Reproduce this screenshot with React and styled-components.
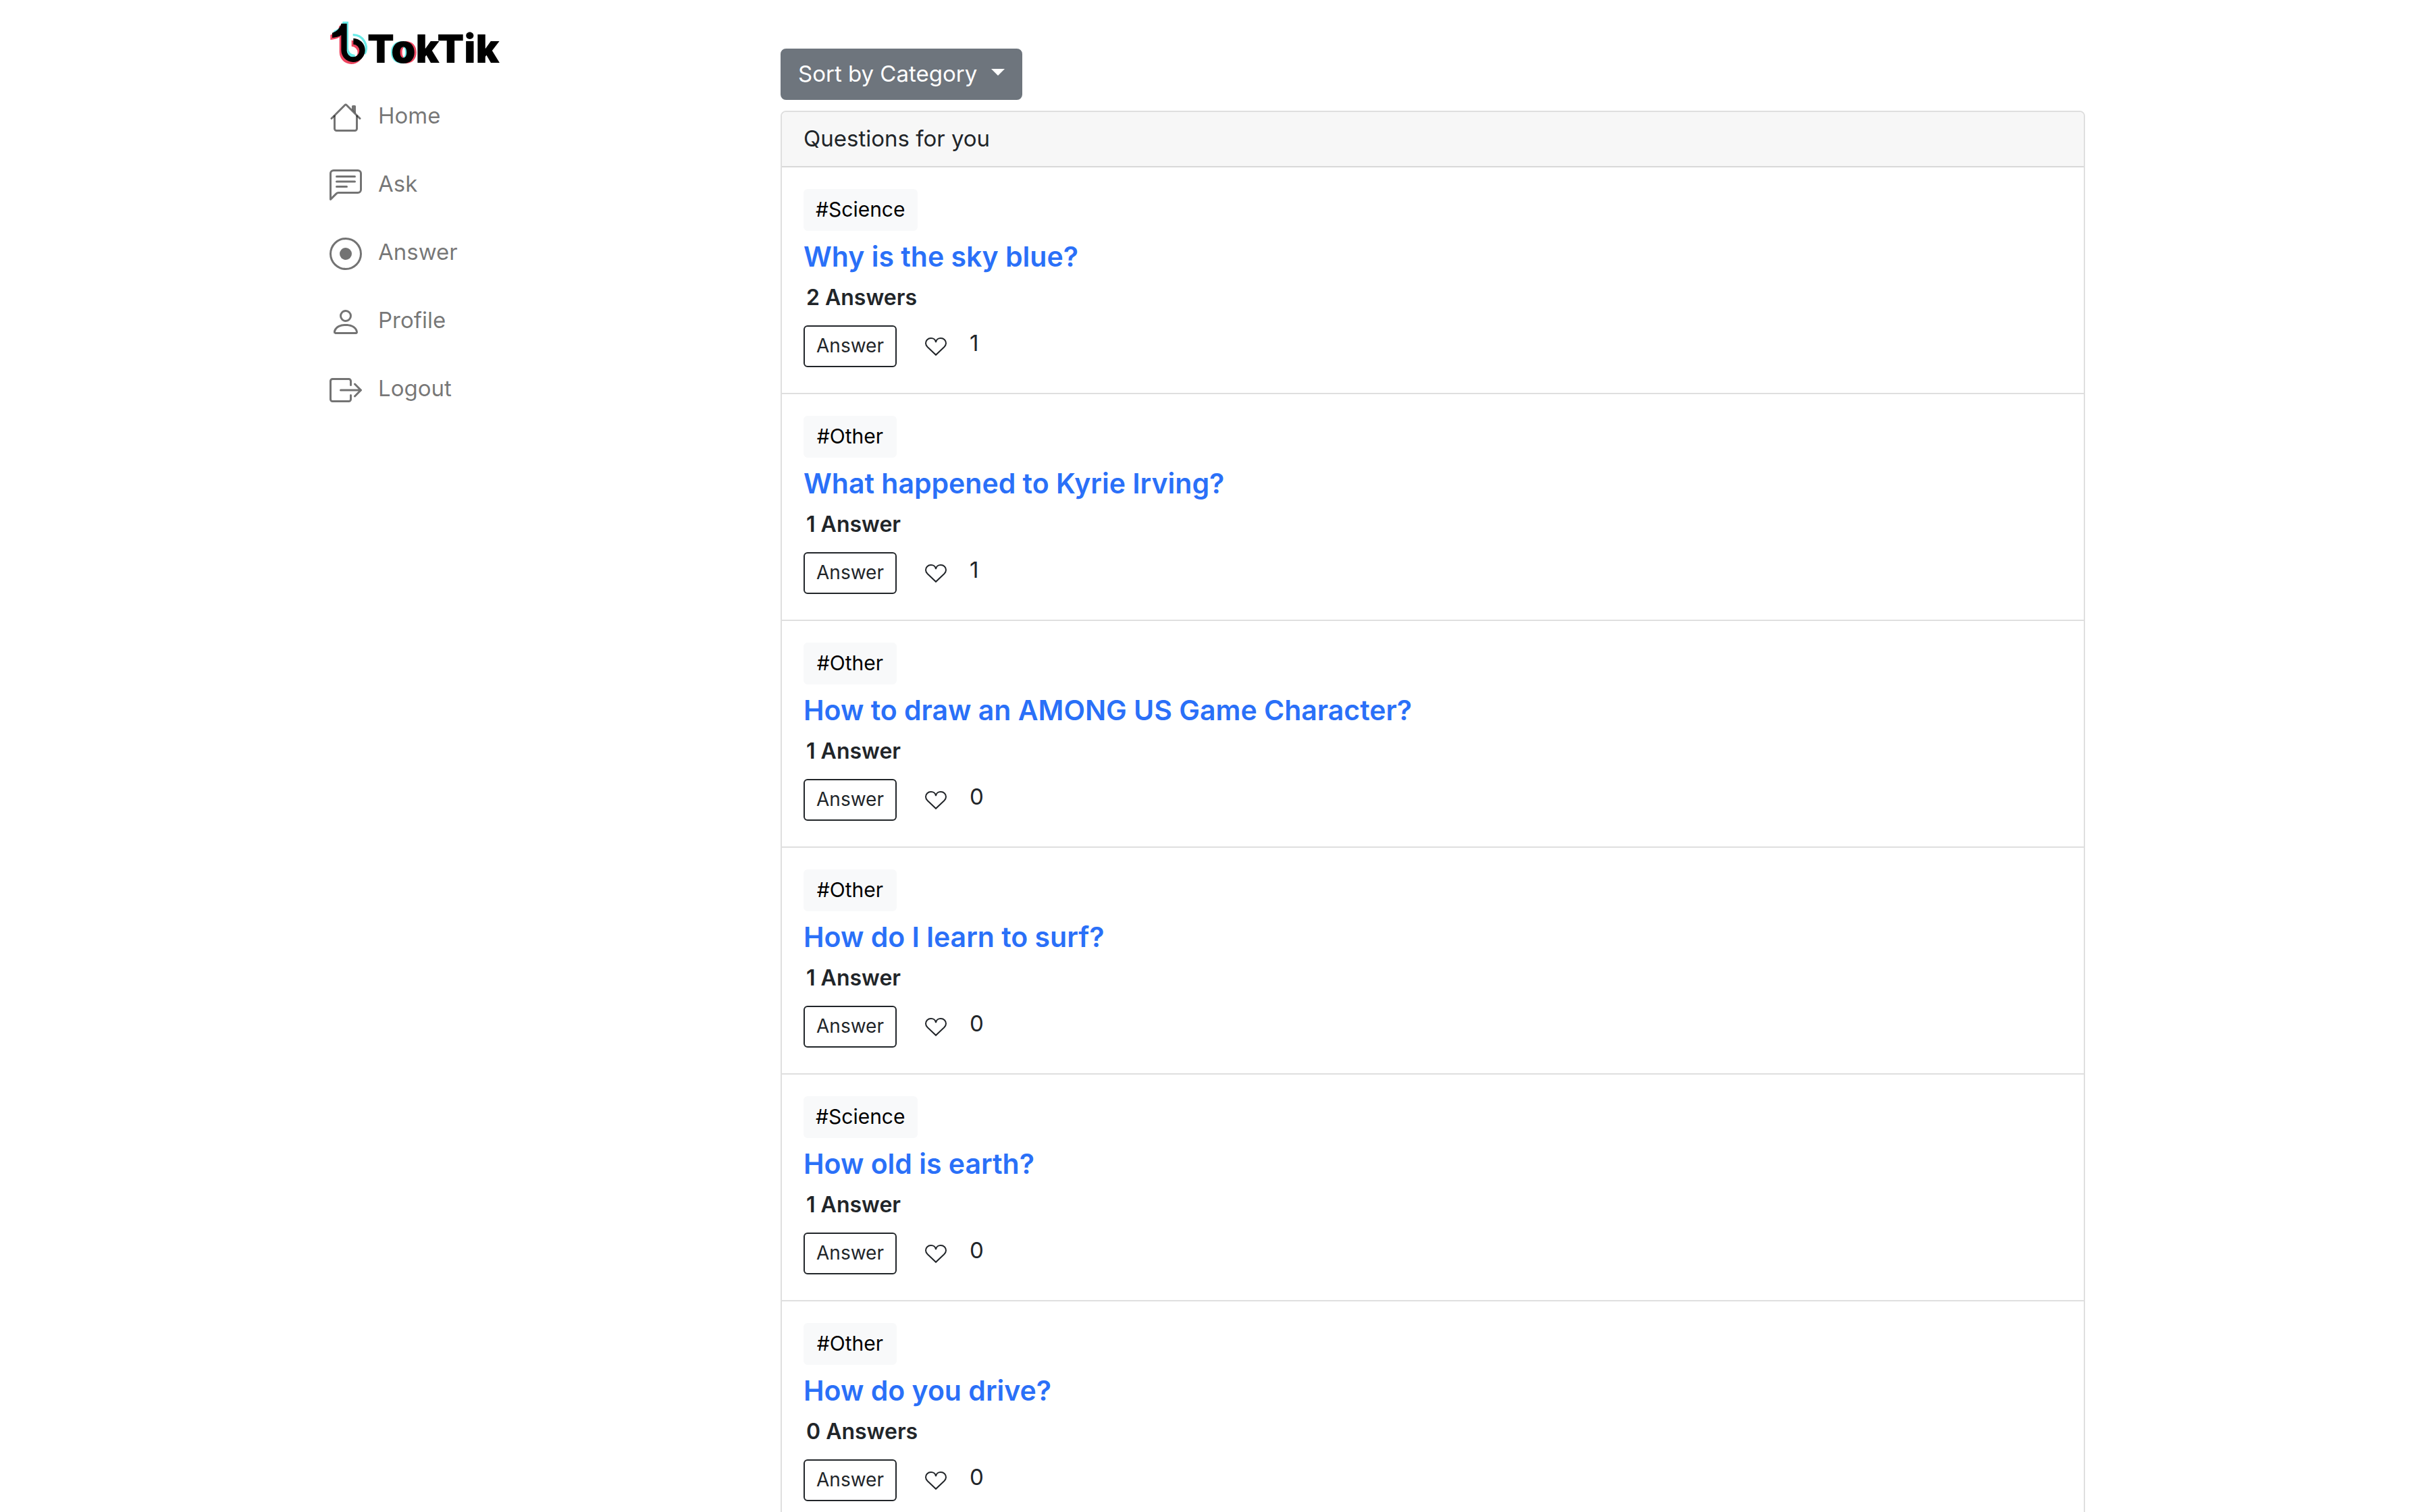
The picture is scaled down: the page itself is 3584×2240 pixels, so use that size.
import React from "react";
import styled, { createGlobalStyle } from "styled-components";

const GlobalStyle = createGlobalStyle`
  * { box-sizing: border-box; }
  body {
    margin: 0;
    background: #fff;
    color: #212529;
    font-family: Inter, "Open Sans", sans-serif;
    font-size: 33px;
    line-height: 48px;
  }
`;

const Container = styled.div`
  display: grid;
  grid-template-columns: 1fr 3fr;
  max-width: 2640px;
  margin: 0 auto;
`;

const Sidebar = styled.aside`
  padding: 26px 16px;
`;

const Brand = styled.a`
  display: flex;
  align-items: flex-start;
  color: #000;
  text-decoration: none;
`;

const BrandMark = styled.svg`
  width: 56px;
  height: 74px;
`;

const Wordmark = styled.span`
  padding-top: 22px;
  font-size: 58px;
  font-weight: 900;
`;

const AccentLetter = styled.span`
  text-shadow: -2px 0 #69ebe8, 3px 0 #ee4660;
`;

const Nav = styled.nav`
  display: flex;
  flex-direction: column;
  gap: 53px;
  padding-top: 50px;
`;

const NavLink = styled.a`
  display: flex;
  align-items: flex-start;
  gap: 24px;
  color: rgba(0, 0, 0, 0.55);
  line-height: 42px;
  text-decoration: none;
`;

const NavIcon = styled.svg`
  width: 48px;
  height: 48px;
  fill: currentColor;
`;

const Main = styled.main`
  padding: 72px 24px 0;
`;

const SortField = styled.label`
  display: inline-flex;
  align-items: center;
  position: relative;
  margin-bottom: 16px;
  vertical-align: top;

  &::after {
    content: "";
    position: absolute;
    right: 26px;
    top: 30px;
    border: 10px solid transparent;
    border-top-color: #fff;
    border-bottom: 0;
    pointer-events: none;
  }
`;

const SortSelect = styled.select`
  appearance: none;
  width: 358px;
  padding: 11px 24px 13px;
  border: 2px solid #6e757d;
  border-radius: 8px;
  background: #6e757d;
  color: #fff;
  font: inherit;
`;

const Card = styled.section`
  border: 2px solid #dfdfdf;
  border-radius: 8px;
  overflow: hidden;
`;

const CardHeader = styled.header`
  padding: 15px 32px 17px;
  border-bottom: 2px solid #d8d8d8;
  background: #f7f7f7;
`;

const QuestionList = styled.ul`
  margin: 0;
  padding: 0;
  list-style: none;
`;

const Question = styled.li`
  display: flex;
  flex-direction: column;
  align-items: flex-start;
  padding: 32px 32px 38px;
  border-bottom: 2px solid #dfdfdf;
`;

const SmallButton = styled.button`
  min-width: 138px;
  padding: 7px 16px 9px;
  border: 2px solid ${(p) => (p.$outlined ? "#212529" : "#f8f9fa")};
  border-radius: 6px;
  background: ${(p) => (p.$outlined ? "transparent" : "#f8f9fa")};
  color: ${(p) => (p.$outlined ? "#212529" : "#000")};
  font: inherit;
  font-size: ${(p) => (p.$outlined ? "28px" : "30px")};
  line-height: 42px;
`;

const Title = styled.a`
  margin-top: 14px;
  color: #2a70f8;
  font-size: 41px;
  font-weight: 600;
  text-decoration: none;
`;

const AnswerCount = styled.div`
  margin: 13px 4px 17px;
  font-size: 32px;
  font-weight: 600;
`;

const Actions = styled.div`
  display: flex;
  align-items: flex-start;
`;

const LikeButton = styled.button`
  display: flex;
  margin: 16px 34px 0 42px;
  padding: 0;
  border: 0;
  background: none;
  color: inherit;
`;

const HeartIcon = styled.svg`
  width: 32px;
  height: 32px;
  fill: none;
  stroke: currentColor;
`;

const LikeCount = styled.span`
  padding-top: 2px;
`;

const navItems = [
  {
    label: "Home",
    paths: [
      "M2 13.5V7h1v6.5a.5.5 0 0 0 .5.5h9a.5.5 0 0 0 .5-.5V7h1v6.5a1.5 1.5 0 0 1-1.5 1.5h-9A1.5 1.5 0 0 1 2 13.5zm11-11V6l-2-2V2.5a.5.5 0 0 1 .5-.5h1a.5.5 0 0 1 .5.5z",
      "M7.293 1.5a1 1 0 0 1 1.414 0l6.647 6.646a.5.5 0 0 1-.708.708L8 2.207 1.354 8.854a.5.5 0 1 1-.708-.708L7.293 1.5z",
    ],
  },
  {
    label: "Ask",
    paths: [
      "M14 1a1 1 0 0 1 1 1v8a1 1 0 0 1-1 1H4.414A2 2 0 0 0 3 11.586l-2 2V2a1 1 0 0 1 1-1h12zM2 0a2 2 0 0 0-2 2v12.793a.5.5 0 0 0 .854.353l2.853-2.853A1 1 0 0 1 4.414 12H14a2 2 0 0 0 2-2V2a2 2 0 0 0-2-2H2z",
      "M3 3.5a.5.5 0 0 1 .5-.5h9a.5.5 0 0 1 0 1h-9a.5.5 0 0 1-.5-.5zM3 6a.5.5 0 0 1 .5-.5h9a.5.5 0 0 1 0 1h-9A.5.5 0 0 1 3 6zm0 2.5a.5.5 0 0 1 .5-.5h5a.5.5 0 0 1 0 1h-5a.5.5 0 0 1-.5-.5z",
    ],
  },
  {
    label: "Answer",
    paths: [
      "M8 15A7 7 0 1 1 8 1a7 7 0 0 1 0 14zm0 1A8 8 0 1 0 8 0a8 8 0 0 0 0 16z",
      "M11 8a3 3 0 1 1-6 0 3 3 0 0 1 6 0z",
    ],
  },
  {
    label: "Profile",
    paths: [
      "M8 8a3 3 0 1 0 0-6 3 3 0 0 0 0 6zm2-3a2 2 0 1 1-4 0 2 2 0 0 1 4 0zm4 8c0 1-1 1-1 1H3s-1 0-1-1 1-4 6-4 6 3 6 4zm-1-.004c-.001-.246-.154-.986-.832-1.664C11.516 10.68 10.289 10 8 10c-2.29 0-3.516.68-4.168 1.332-.678.678-.83 1.418-.832 1.664h10z",
    ],
  },
  {
    label: "Logout",
    paths: [
      "M10 12.5a.5.5 0 0 1-.5.5h-8a.5.5 0 0 1-.5-.5v-9a.5.5 0 0 1 .5-.5h8a.5.5 0 0 1 .5.5v2a.5.5 0 0 0 1 0v-2A1.5 1.5 0 0 0 9.5 2h-8A1.5 1.5 0 0 0 0 3.5v9A1.5 1.5 0 0 0 1.5 14h8a1.5 1.5 0 0 0 1.5-1.5v-2a.5.5 0 0 0-1 0v2z",
      "M15.854 8.354a.5.5 0 0 0 0-.708l-3-3a.5.5 0 0 0-.708.708L14.293 7.5H5.5a.5.5 0 0 0 0 1h8.793l-2.147 2.146a.5.5 0 0 0 .708.708l3-3z",
    ],
  },
];

const questions = [
  { tag: "Science", title: "Why is the sky blue?", answers: 2, likes: 1 },
  { tag: "Other", title: "What happened to Kyrie Irving?", answers: 1, likes: 1 },
  { tag: "Other", title: "How to draw an AMONG US Game Character?", answers: 1, likes: 0 },
  { tag: "Other", title: "How do I learn to surf?", answers: 1, likes: 0 },
  { tag: "Science", title: "How old is earth?", answers: 1, likes: 0 },
  { tag: "Other", title: "How do you drive?", answers: 0, likes: 0 },
];

const noteShape =
  "M36 68C56 62 71 48 76 27H101V145A28 28 0 1 0 130 119V92A53 53 0 1 1 76 145V78C66 86 50 88 36 90Z";
const noteStem =
  "M36 68C56 62 71 48 76 27H101V145A28 28 0 0 0 130 174V198A53 53 0 0 1 76 145V78C66 86 50 88 36 90Z";

function Logo() {
  return (
    <BrandMark viewBox="24 0 168 222" aria-hidden="true">
      <path d={noteShape} fill="#ee4660" transform="translate(-8 9)" />
      <path d={noteStem} fill="#69ebe8" transform="translate(7 -9)" />
      <path d="M128 77A58 58 0 0 1 180 162" fill="none" stroke="#69ebe8" strokeWidth="10" />
      <path d={noteShape} fill="#000" />
    </BrandMark>
  );
}

function QuestionItem({ tag, title, answers, likes }) {
  return (
    <Question>
      <SmallButton type="button">#{tag}</SmallButton>
      <Title href="#">{title}</Title>
      <AnswerCount>{`${answers} ${answers === 1 ? "Answer" : "Answers"}`}</AnswerCount>
      <Actions>
        <SmallButton type="button" $outlined>Answer</SmallButton>
        <LikeButton type="button" aria-label="Like">
          <HeartIcon viewBox="0 0 16 16" strokeWidth="1" aria-hidden="true">
            <path d="M8 4.6C7.8 2.6 6.2 1.5 4.4 1.5C2.1 1.5 .5 3.2 .5 5.2C.5 6.6 1.2 7.4 1.9 8.1L8 13.9L14.1 8.1C14.8 7.4 15.5 6.6 15.5 5.2C15.5 3.2 13.9 1.5 11.6 1.5C9.8 1.5 8.2 2.6 8 4.6Z" />
          </HeartIcon>
        </LikeButton>
        <LikeCount>{likes}</LikeCount>
      </Actions>
    </Question>
  );
}

export default function App() {
  return (
    <>
      <GlobalStyle />
      <Container>
        <Sidebar>
          <Brand href="#">
            <Logo />
            <Wordmark>T<AccentLetter>o</AccentLetter>kTik</Wordmark>
          </Brand>
          <Nav>
            {navItems.map(({ label, paths }) => (
              <NavLink href="#" key={label}>
                <NavIcon viewBox="0 0 16 16" aria-hidden="true">
                  {paths.map((d) => <path d={d} key={d} />)}
                </NavIcon>
                {label}
              </NavLink>
            ))}
          </Nav>
        </Sidebar>
        <Main>
          <SortField>
            <SortSelect aria-label="Sort by Category">
              <option>Sort by Category</option>
              <option>Science</option>
              <option>Other</option>
            </SortSelect>
          </SortField>
          <Card>
            <CardHeader>Questions for you</CardHeader>
            <QuestionList>
              {questions.map((q) => <QuestionItem key={q.title} {...q} />)}
            </QuestionList>
          </Card>
        </Main>
      </Container>
    </>
  );
}
